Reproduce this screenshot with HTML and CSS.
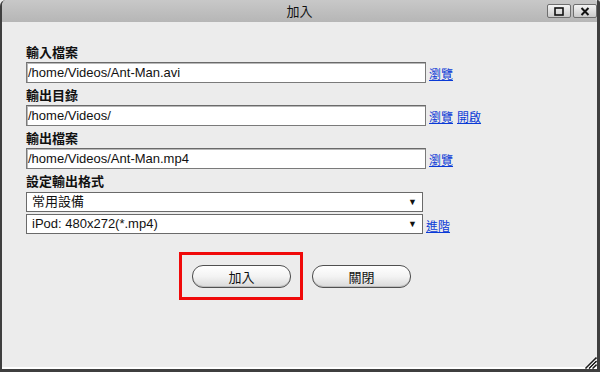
FILE: index.html
```html
<!DOCTYPE html>
<html lang="zh-Hant">
<head>
<meta charset="utf-8">
<title>加入</title>
<link rel="stylesheet" href="styles.css">
</head>
<body>
<div class="window">
  <div class="titlebar">
    <span class="title">加入</span>
    <div class="wbtns">
      <span class="wbtn"><svg width="10" height="9" viewBox="0 0 10 9"><rect x="1" y="1" width="8" height="7" fill="none" stroke="#111" stroke-width="1.6"/></svg></span>
      <span class="wbtn"><svg width="10" height="9" viewBox="0 0 10 9"><path d="M1.5 1 L8.5 8 M8.5 1 L1.5 8" stroke="#111" stroke-width="2"/></svg></span>
    </div>
  </div>
  <div class="content">
    <div class="label">輸入檔案</div>
    <div class="row">
      <div class="field">/home/Videos/Ant-Man.avi</div>
      <a class="link" href="#">瀏覽</a>
    </div>
    <div class="label">輸出目錄</div>
    <div class="row">
      <div class="field">/home/Videos/</div>
      <a class="link" href="#">瀏覽</a><a class="link" href="#">開啟</a>
    </div>
    <div class="label">輸出檔案</div>
    <div class="row">
      <div class="field">/home/Videos/Ant-Man.mp4</div>
      <a class="link" href="#">瀏覽</a>
    </div>
    <div class="label">設定輸出格式</div>
    <div class="row sel-row">
      <div class="select"><span class="sel-text">常用設備</span><span class="arrow">▼</span></div>
    </div>
    <div class="row sel-row second">
      <div class="select"><span class="sel-text">iPod: 480x272(*.mp4)</span><span class="arrow">▼</span></div>
      <a class="link" href="#">進階</a>
    </div>
    <div class="actions">
      <div class="highlight"><span class="btn">加入</span></div>
      <span class="btn">關閉</span>
    </div>
  </div>
  <svg class="grip" width="13" height="13" viewBox="0 0 13 13"><path d="M12.5 1.5 L1.5 12.5 M12.5 5 L5 12.5 M12.5 8.5 L8.5 12.5" stroke="#1a1a1a" stroke-width="1.6"/><path d="M12.5 3.2 L3.2 12.5 M12.5 6.8 L6.8 12.5" stroke="#ffffff" stroke-width="1"/></svg>
</div>
</body>
</html>
```

FILE: styles.css
```css
* { box-sizing: border-box; }
html, body { margin: 0; padding: 0; }
body {
  width: 600px;
  height: 372px;
  overflow: hidden;
  background: #ececec;
  font-family: "Noto Sans CJK TC", "Liberation Sans", sans-serif;
}
.window {
  position: relative;
  width: 600px;
  height: 372px;
  display: flex;
  flex-direction: column;
  background: #ececec;
  border-left: 2px solid #3f3f3f;
  border-right: 3px solid #3f3f3f;
  border-bottom: 3px solid #3f3f3f;
  border-top-left-radius: 6px;
  border-top-right-radius: 3px;
  box-shadow: inset 0 -2px 0 #ffffff;
}
.titlebar {
  height: 22px;
  flex: none;
  background: linear-gradient(#c8c8c8, #b6b6b6);
  border-top-left-radius: 5px;
  border-top-right-radius: 2px;
  display: flex;
  align-items: center;
  justify-content: center;
  position: relative;
}
.title {
  font-size: 13px;
  color: #111;
  line-height: 22px;
}
.wbtns {
  position: absolute;
  right: 0;
  top: 4px;
  display: flex;
  gap: 2px;
}
.wbtn {
  width: 24px;
  height: 14px;
  border: 1px solid #6e6e6e;
  border-radius: 2px;
  background: linear-gradient(#f4f4f4, #c9c9c9);
  display: flex;
  align-items: center;
  justify-content: center;
}
.content {
  flex: 1;
  padding: 20px 0 0 24px;
  display: flex;
  flex-direction: column;
}
.label {
  font-size: 13px;
  font-weight: bold;
  line-height: 20px;
  height: 20px;
  color: #111;
}
.row {
  display: flex;
  align-items: center;
  height: 21px;
  margin-bottom: 2px;
}
.field {
  width: 400px;
  height: 21px;
  background: #fff;
  border: 1px solid #7a7a7a;
  border-top-color: #6a6a6a;
  box-shadow: inset 1px 1px 0 #b8b8b8;
  font-family: "Liberation Sans", Arial, sans-serif;
  font-size: 13px;
  line-height: 19px;
  padding: 0 1px;
  color: #111;
}
.link {
  font-size: 12px;
  color: #0a3ad6;
  text-decoration: underline;
  margin-left: 3px;
  line-height: 16px;
  padding-top: 3px;
}
.link + .link { margin-left: 4px; }
.sel-row { height: 20px; margin-top: 1px; margin-bottom: 2px; }
.sel-row.second { margin-top: 0; }
.select {
  width: 397px;
  height: 20px;
  background: #fff;
  border: 1px solid #6a6a6a;
  display: flex;
  align-items: center;
  justify-content: space-between;
  padding: 0 5px 0 5px;
  font-size: 13px;
  color: #111;
  font-family: "Liberation Sans", "Noto Sans CJK TC", sans-serif;
}
.sel-text { line-height: 18px; }
.arrow { font-size: 9px; color: #111; }
.actions {
  display: flex;
  align-items: center;
  gap: 9px;
  margin-top: 16px;
  padding-left: 153px;
}
.highlight {
  border: 3px solid #f00a0a;
  padding: 10px 9px 9px 10px;
}
.btn {
  display: flex;
  align-items: center;
  justify-content: center;
  width: 99px;
  height: 23px;
  border: 1px solid #505050;
  border-radius: 11px;
  background: linear-gradient(#ffffff 0%, #f3f3f3 50%, #d9d9d9 100%);
  box-shadow: inset 0 -1px 0 #bdbdbd;
  font-size: 13px;
  color: #111;
}
.grip {
  position: absolute;
  right: 0;
  bottom: 0;
}
```
